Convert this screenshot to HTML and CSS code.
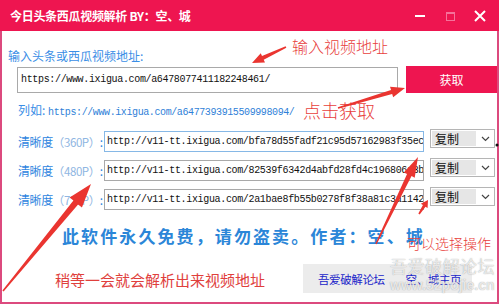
FILE: index.html
```html
<!DOCTYPE html>
<html lang="zh">
<head>
<meta charset="utf-8">
<link rel="stylesheet" href="styles.css">
</head>
<body>
<div class="app">
  <div class="titlebar">
    <span class="title">今日头条西瓜视频解析 BY：空、城</span>
    <div class="controls">
      <svg class="ctl" width="14" height="14" viewBox="0 0 14 14"><rect x="2" y="6" width="10" height="2" fill="#fff"/></svg>
      <svg class="ctl" width="14" height="14" viewBox="0 0 14 14"><rect x="3.5" y="3.5" width="8" height="8" fill="none" stroke="#f5719a" stroke-width="1"/><rect x="3.5" y="3.5" width="8" height="1.5" fill="#f5719a"/></svg>
      <svg class="ctl" width="14" height="14" viewBox="0 0 14 14"><path d="M2 2 L12 12 M12 2 L2 12" stroke="#fff" stroke-width="2"/></svg>
    </div>
  </div>
  <div class="frame">
    <div class="label">输入头条或西瓜视频地址:</div>
    <div class="fetch-row">
      <div class="field url-field">https://www.ixigua.com/a6478077411182248461/</div>
      <div class="fetch-btn">获取</div>
    </div>
    <div class="example">列如: <span class="mono">https://www.ixigua.com/a6477393915509998094/</span></div>
    <div class="rows">
      <div class="row">
        <div class="row-label">清晰度<span class="res">（360P）</span>:</div>
        <div class="field row-field focused">http://v11-tt.ixigua.com/bfa78d55fadf21c95d57162983f35ec</div>
        <div class="select"><span class="sel-text">复制</span><span class="sel-arrow"><svg width="9" height="6" viewBox="0 0 9 6"><path d="M1 1 L4.5 4.5 L8 1" fill="none" stroke="#444" stroke-width="1.2"/></svg></span></div>
      </div>
      <div class="row">
        <div class="row-label">清晰度<span class="res">（480P）</span>:</div>
        <div class="field row-field">http://v11-tt.ixigua.com/82539f6342d4abfd28fd4c196806d3b8</div>
        <div class="select"><span class="sel-text">复制</span><span class="sel-arrow"><svg width="9" height="6" viewBox="0 0 9 6"><path d="M1 1 L4.5 4.5 L8 1" fill="none" stroke="#444" stroke-width="1.2"/></svg></span></div>
      </div>
      <div class="row">
        <div class="row-label">清晰度<span class="res">（720P）</span>:</div>
        <div class="field row-field">http://v11-tt.ixigua.com/2a1bae8fb55b0278f8f38a81c3a1142</div>
        <div class="select"><span class="sel-text">复制</span><span class="sel-arrow"><svg width="9" height="6" viewBox="0 0 9 6"><path d="M1 1 L4.5 4.5 L8 1" fill="none" stroke="#444" stroke-width="1.2"/></svg></span></div>
      </div>
    </div>
    <div class="notice">此软件永久免费，请勿盗卖。作者：空、城</div>
    <div class="footer">
      <div class="wait">稍等一会就会解析出来视频地址</div>
      <div class="links"><span class="link">吾爱破解论坛</span><span class="link">空、城主页</span></div>
    </div>
  </div>

  <div class="note note-input">输入视频地址</div>
  <div class="note note-fetch">点击获取</div>
  <div class="note note-select">可以选择操作</div>
  <div class="watermark"><div class="wm-cn">吾爱破解论坛</div><div class="wm-en">www.52pojie.cn</div></div>

  <svg class="overlay" width="499" height="304" viewBox="0 0 499 304">
    <g fill="#ea3530">
      <polygon points="285.66,46.28 262.01,56.08 260.73,53.37 252,63 264.99,62.41 263.71,59.70 286.34,47.72"/>
      <polygon points="338.23,108.77 392.16,93.92 393.16,97.27 405,88 390.02,86.73 391.02,90.08 337.77,107.23"/>
      <polygon points="3.62,291.51 78.08,204.44 81.94,207.61 91,184 69.58,197.45 73.44,200.62 2.38,290.49"/>
      <polygon points="376.63,244.30 411.55,176.11 414.71,177.63 418,157 403.89,172.41 407.05,173.93 375.37,243.70"/>
      <polygon points="419.67,214.43 425.47,206.70 427.57,208.05 428,200 420.85,203.73 422.95,205.08 418.33,213.57"/>
    </g>
    <circle cx="497" cy="145" r="1.5" fill="#111"/>
  </svg>
</div>
</body>
</html>
```

FILE: styles.css
```css
html, body {
  margin: 0;
  padding: 0;
  background: #fff;
}

.app {
  position: relative;
  width: 499px;
  height: 304px;
  display: flex;
  flex-direction: column;
  overflow: hidden;
  font-family: "Noto Sans CJK SC", "Noto Sans", sans-serif;
}

.titlebar {
  height: 31px;
  flex: 0 0 31px;
  background: #ee1550;
  display: flex;
  align-items: center;
  padding-left: 10px;
  color: #fff;
}

.title {
  font-size: 12px;
  font-weight: 700;
  letter-spacing: -0.3px;
}

.controls {
  margin-left: auto;
  display: flex;
  align-items: center;
  gap: 16px;
  padding-right: 12px;
}

.ctl {
  display: block;
}

.frame {
  flex: 1;
  border: 2px solid #dc4a7e;
  border-top: 0;
  padding: 0 0 0 6px;
  display: flex;
  flex-direction: column;
}

.label {
  margin-top: 16px;
  height: 17px;
  line-height: 17px;
  font-size: 12px;
  color: #3a8ee6;
}

.fetch-row {
  display: flex;
  align-items: flex-start;
  margin-top: 2px;
  height: 27px;
}

.field {
  box-sizing: border-box;
  border: 1px solid #a9a9a9;
  background: #fff;
  font-family: "Liberation Mono", monospace;
  font-size: 10px;
  letter-spacing: -0.34px;
  color: #111;
  white-space: nowrap;
  overflow: hidden;
  padding-left: 3px;
}

.url-field {
  margin-left: 9px;
  margin-top: 1px;
  width: 381px;
  height: 26px;
  line-height: 24px;
}

.fetch-btn {
  margin-left: 8px;
  width: 91px;
  height: 27px;
  background: #ee1550;
  color: #fff;
  font-size: 12px;
  display: flex;
  align-items: center;
  justify-content: center;
}

.example {
  margin-top: 8px;
  height: 18px;
  line-height: 18px;
  padding-left: 10px;
  font-size: 12px;
  color: #3a8ee6;
}

.mono {
  font-family: "Liberation Mono", monospace;
  font-size: 10px;
  letter-spacing: -0.4px;
  color: #2f7fd8;
}

.rows {
  margin-top: 12px;
  display: flex;
  flex-direction: column;
  gap: 8px;
}

.row {
  display: flex;
  align-items: flex-start;
  height: 21px;
}

.row-label {
  box-sizing: border-box;
  width: 96px;
  padding-left: 10px;
  height: 21px;
  line-height: 21px;
  font-size: 12px;
  color: #2f86e0;
  white-space: nowrap;
  letter-spacing: -0.4px;
}

.res {
  color: #8fb6e2;
  font-size: 11.5px;
}

.row-field {
  width: 320px;
  height: 21px;
  line-height: 19px;
  padding-left: 2px;
}

.row-field.focused {
  border-color: #86b8e6;
}

.select {
  margin-left: 6px;
  margin-top: -2px;
  width: 65px;
  height: 19px;
  box-sizing: border-box;
  border: 1px solid #b5b5b5;
  display: flex;
  background: #fff;
}

.sel-text {
  flex: 1;
  background: #e6e6e6;
  margin: 1px 0 1px 1px;
  font-size: 12px;
  line-height: 15px;
  padding-left: 3px;
  color: #111;
}

.sel-arrow {
  width: 18px;
  display: flex;
  align-items: center;
  justify-content: center;
}

.notice {
  margin-top: 14px;
  margin-left: 54px;
  height: 24px;
  line-height: 24px;
  font-size: 17px;
  font-weight: 700;
  letter-spacing: 2.1px;
  color: #2b86d8;
  white-space: nowrap;
}

.footer {
  margin-top: 16px;
  height: 29px;
  display: flex;
  align-items: center;
}

.wait {
  margin-left: 47px;
  font-size: 15px;
  color: #e0403c;
  white-space: nowrap;
  position: relative;
  top: 1px;
}

.links {
  margin-left: auto;
  margin-right: 25px;
  width: 169px;
  height: 29px;
  background: #ececec;
  display: flex;
  align-items: center;
  box-sizing: border-box;
  padding-left: 15px;
  gap: 21px;
}

.link {
  font-size: 11.5px;
  color: #1b25c9;
  letter-spacing: -0.4px;
}

.note {
  position: absolute;
  color: #e8403c;
  white-space: nowrap;
  font-weight: 300;
}

.note-input {
  left: 292px;
  top: 36px;
  font-size: 16px;
  line-height: 20px;
}

.note-fetch {
  left: 303px;
  top: 99px;
  font-size: 18px;
  line-height: 22px;
}

.note-select {
  left: 407px;
  top: 233px;
  font-size: 14px;
  line-height: 20px;
}

.watermark {
  position: absolute;
  left: 390px;
  top: 255px;
  color: rgba(255, 255, 255, 0.75);
  text-shadow: 0 0 1px rgba(110, 110, 110, 0.7);
}

.wm-cn {
  font-size: 17px;
  line-height: 22px;
  letter-spacing: 0.5px;
}

.wm-en {
  font-family: "Liberation Sans", sans-serif;
  font-size: 14px;
  font-weight: 700;
  line-height: 16px;
}

.overlay {
  position: absolute;
  left: 0;
  top: 0;
  pointer-events: none;
}
```
